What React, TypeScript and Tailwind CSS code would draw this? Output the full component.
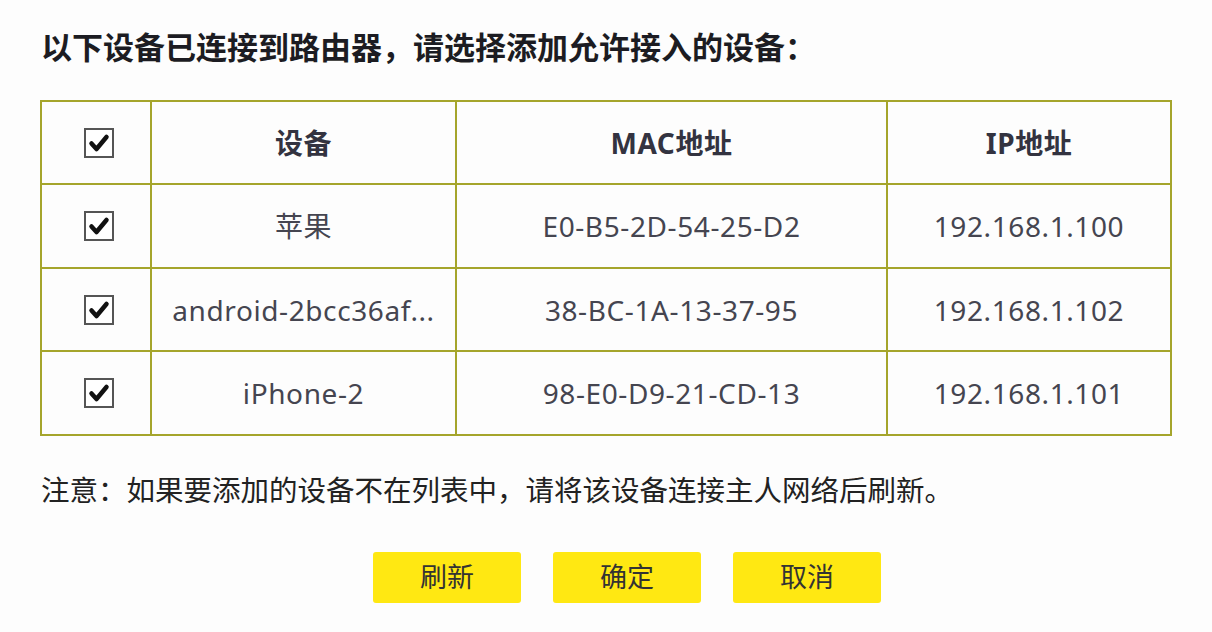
import React from 'react';

interface Device {
  name: string;
  mac: string;
  ip: string;
}

const devices: Device[] = [
  { name: '苹果', mac: 'E0-B5-2D-54-25-D2', ip: '192.168.1.100' },
  { name: 'android-2bcc36af...', mac: '38-BC-1A-13-37-95', ip: '192.168.1.102' },
  { name: 'iPhone-2', mac: '98-E0-D9-21-CD-13', ip: '192.168.1.101' },
];

const font = { fontFamily: '"Noto Sans", "Noto Sans CJK SC", sans-serif' };

// Checked box, drawn to match the old router UI
const CheckBox = () => (
  <svg width="30" height="30" viewBox="0 0 30 30" className="block ml-[42px]">
    <rect x="1" y="1" width="28" height="28" fill="#fff" stroke="#555" strokeWidth="2" />
    <path d="M7.5 15.5 L12.5 21 L22.5 9" fill="none" stroke="#111" strokeWidth="4.5" strokeLinecap="round" strokeLinejoin="round" />
  </svg>
);

const Button = ({ label }: { label: string }) => (
  <button className="w-[148px] h-[51px] rounded-[3px] bg-[#ffe812] text-[27px] text-[#333] flex items-center justify-center">
    {label}
  </button>
);

export default function App() {
  const cell = 'border-2 border-[#a5a52c] text-center align-middle p-0';
  const rowHeights = ['h-[84px]', 'h-[83px]', 'h-[84px]'];
  return (
    <div className="w-[1212px] h-[632px] bg-[#fdfdfd] overflow-hidden" style={font}>
      <div className="pl-[41px] h-[94px] flex items-center text-[31px] font-bold text-[#1c1c22]">
        以下设备已连接到路由器，请选择添加允许接入的设备：
      </div>

      <div className="pl-[40px] mt-[6px]">
        <table className="table-fixed border-collapse w-[1130px] text-[28px] tracking-[0.6px] text-[#454550]">
          <colgroup>
            <col className="w-[110px]" />
            <col className="w-[305px]" />
            <col className="w-[431px]" />
            <col className="w-[284px]" />
          </colgroup>
          <thead>
            <tr className="h-[83px]">
              <th className={cell}><CheckBox /></th>
              <th className={`${cell} font-bold text-[#333340]`}>设备</th>
              <th className={`${cell} font-bold text-[#333340]`}>MAC地址</th>
              <th className={`${cell} font-bold text-[#333340]`}>IP地址</th>
            </tr>
          </thead>
          <tbody>
            {devices.map((d, i) => (
              <tr key={d.mac} className={rowHeights[i]}>
                <td className={cell}><CheckBox /></td>
                <td className={cell}>{d.name}</td>
                <td className={cell}>{d.mac}</td>
                <td className={cell}>{d.ip}</td>
              </tr>
            ))}
          </tbody>
        </table>
      </div>

      <div className="pl-[41px] h-[108px] flex items-center text-[28.5px] text-[#222]">
        注意：如果要添加的设备不在列表中，请将该设备连接主人网络后刷新。
      </div>

      <div className="flex gap-[32px] pl-[373px] mt-[8px]">
        <Button label="刷新" />
        <Button label="确定" />
        <Button label="取消" />
      </div>
    </div>
  );
}
